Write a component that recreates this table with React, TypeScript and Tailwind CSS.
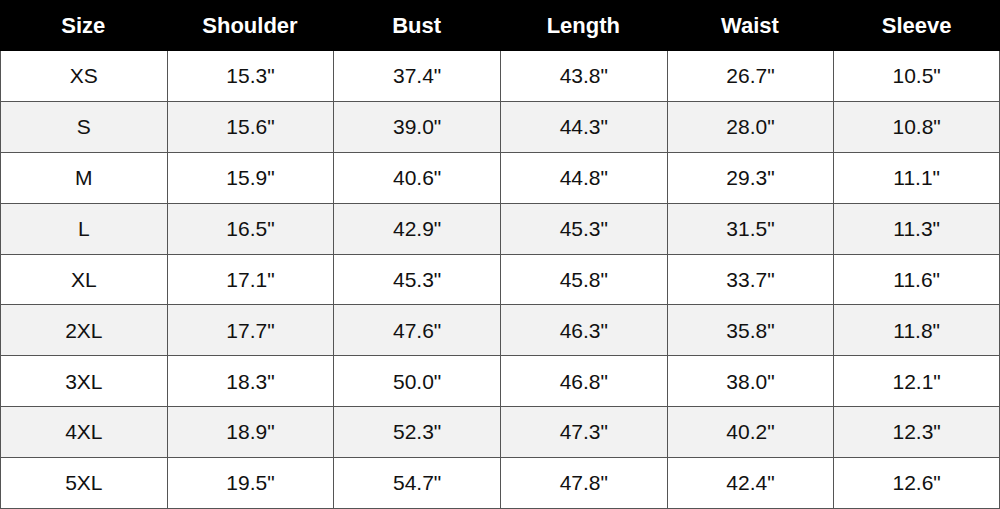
const headers = ["Size", "Shoulder", "Bust", "Length", "Waist", "Sleeve"];

const rows = [
  ["XS", '15.3"', '37.4"', '43.8"', '26.7"', '10.5"'],
  ["S", '15.6"', '39.0"', '44.3"', '28.0"', '10.8"'],
  ["M", '15.9"', '40.6"', '44.8"', '29.3"', '11.1"'],
  ["L", '16.5"', '42.9"', '45.3"', '31.5"', '11.3"'],
  ["XL", '17.1"', '45.3"', '45.8"', '33.7"', '11.6"'],
  ["2XL", '17.7"', '47.6"', '46.3"', '35.8"', '11.8"'],
  ["3XL", '18.3"', '50.0"', '46.8"', '38.0"', '12.1"'],
  ["4XL", '18.9"', '52.3"', '47.3"', '40.2"', '12.3"'],
  ["5XL", '19.5"', '54.7"', '47.8"', '42.4"', '12.6"'],
];

export default function App() {
  return (
    <div className="w-[1000px] h-[509px] bg-white font-['Liberation_Sans',Arial,sans-serif]">
      <div className="grid grid-cols-6 grid-rows-[51px_repeat(9,1fr)] w-full h-full">
        {headers.map((h) => (
          <div
            key={h}
            className="bg-black text-white font-bold text-[22px] flex items-center justify-center pb-[1px]"
          >
            {h}
          </div>
        ))}
        {rows.map((row, r) =>
          row.map((cell, c) => (
            <div
              key={`${r}-${c}`}
              className={`flex items-center justify-center text-[21px] text-[#111] border-l border-b border-[#555] ${
                r % 2 === 1 ? "bg-[#f2f2f2]" : "bg-white"
              } ${c === 5 ? "border-r" : ""}`}
            >
              {cell}
            </div>
          ))
        )}
      </div>
    </div>
  );
}
